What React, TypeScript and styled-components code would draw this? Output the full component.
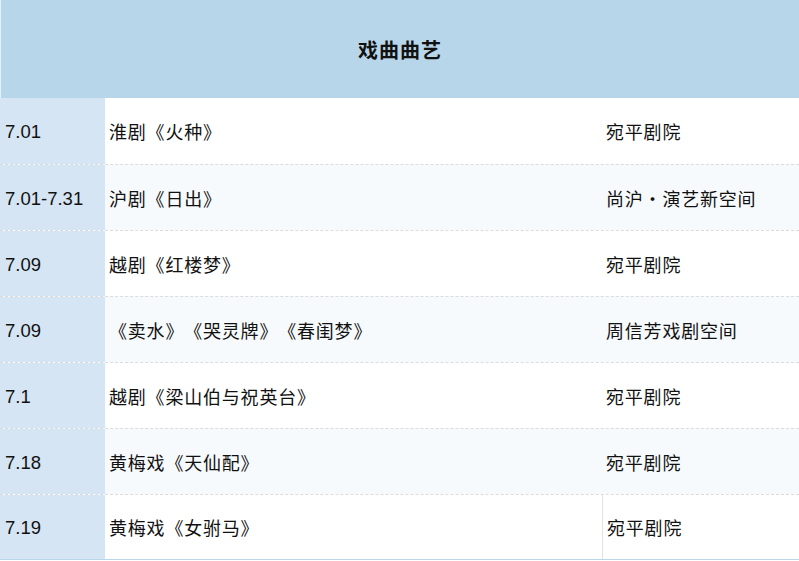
import React from "react";
import styled, { createGlobalStyle } from "styled-components";

const GlobalStyle = createGlobalStyle`
  html, body {
    margin: 0;
    padding: 0;
    background: #ffffff;
  }
  body {
    font-family: "Liberation Sans", "Noto Sans CJK SC", sans-serif;
    color: #111;
    text-spacing-trim: space-all;
  }
`;

const Table = styled.div`
  width: 799px;
  border-bottom: 1px solid #b8d6ea;
  box-sizing: border-box;
`;

const Header = styled.div`
  height: 98px;
  background: #b8d6ea;
  border-left: 1px solid #e6f0f7;
  display: flex;
  align-items: center;
  justify-content: center;
  font-family: "Noto Sans CJK SC", sans-serif;
  font-weight: bold;
  font-size: 20px;
  letter-spacing: 1px;
  color: #111;
`;

const Row = styled.div<{ $striped: boolean; $first?: boolean; $last?: boolean }>`
  display: grid;
  grid-template-columns: 105px 497px 1fr;
  height: ${(p) => (p.$last ? 65 : 66)}px;
  background: ${(p) => (p.$striped ? "#f7fafc" : "#ffffff")};
  border-top: ${(p) => (p.$first ? "none" : "1px dashed #dcdcdc")};
  box-sizing: border-box;
`;

const DateCell = styled.div`
  background: #d5e5f3;
  display: flex;
  align-items: center;
  padding: 2px 0 0 5px;
  font-family: "Liberation Sans", Arial, sans-serif;
  font-size: 18.5px;
`;

const Cell = styled.div<{ $divider?: boolean }>`
  display: flex;
  align-items: center;
  padding-left: 4px;
  font-family: "Noto Sans CJK SC", sans-serif;
  font-size: 18px;
  letter-spacing: 0.8px;
  text-spacing-trim: space-all;
  white-space: pre;
  border-left: ${(p) => (p.$divider ? "1px solid #e2e2e2" : "none")};
`;

const rows = [
  ["7.01", "淮剧《火种》", "宛平剧院"],
  ["7.01-7.31", "沪剧《日出》", "尚沪•演艺新空间"],
  ["7.09", "越剧《红楼梦》", "宛平剧院"],
  ["7.09", "《卖水》《哭灵牌》《春闺梦》", "周信芳戏剧空间"],
  ["7.1", "越剧《梁山伯与祝英台》", "宛平剧院"],
  ["7.18", "黄梅戏《天仙配》", "宛平剧院"],
  ["7.19", "黄梅戏《女驸马》", "宛平剧院"],
];

export default function App() {
  return (
    <>
      <GlobalStyle />
      <Table>
        <Header>戏曲曲艺</Header>
        {rows.map(([date, show, venue], i) => {
          const last = i === rows.length - 1;
          return (
            <Row key={i} $striped={i % 2 === 1} $first={i === 0} $last={last}>
              <DateCell>{date}</DateCell>
              <Cell>{show}</Cell>
              <Cell $divider={last}>{venue}</Cell>
            </Row>
          );
        })}
      </Table>
    </>
  );
}
